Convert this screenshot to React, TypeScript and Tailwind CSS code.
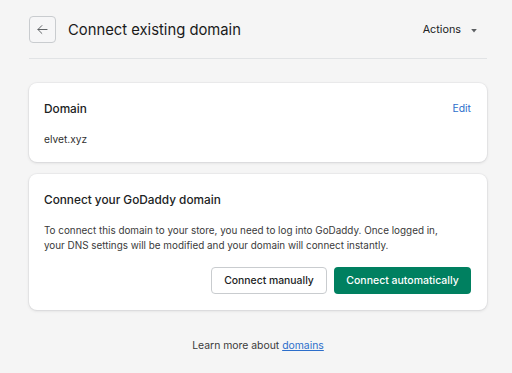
import React from 'react';

const App = () => {
  return (
    <div className="min-h-[373px] w-[512px] bg-[#f5f5f5] font-['Inter',sans-serif] text-[#202223]">
      <div className="ml-[29px] w-[458px] pt-4">
        {/* header */}
        <div className="flex items-center border-b border-[#e1e3e5] pb-[15px]">
          <button className="flex h-[27px] w-[27px] items-center justify-center rounded-[4px] border border-[#c9cccf] bg-[#f6f6f7]">
            <svg width="13" height="13" viewBox="0 0 20 20" fill="none" stroke="#5c5f62" strokeWidth="1.5" strokeLinecap="round" strokeLinejoin="round">
              <path d="M17 10H3M9 4l-6 6 6 6" />
            </svg>
          </button>
          <h1 className="ml-[12px] text-[14.8px] font-normal leading-[20px] text-[#1a1a1a]">Connect existing domain</h1>
          <div className="ml-auto mr-[10px] mt-[2px] flex items-center gap-[10px] text-[10.8px] text-[#202223]">
            <span>Actions</span>
            <svg width="6" height="4" viewBox="0 0 7 5">
              <path d="M0 0h7L3.5 4.5z" fill="#5c5f62" />
            </svg>
          </div>
        </div>

        {/* domain card */}
        <div className="mt-[24px] rounded-[8px] bg-white pb-[16px] pl-[15px] pr-[16px] pt-[18px] shadow-[0_0_0_1px_rgba(63,63,68,0.04),0_1px_3px_0_rgba(63,63,68,0.15)]">
          <div className="flex items-center justify-between">
            <h2 className="text-[11.8px] font-medium leading-[16px]">Domain</h2>
            <a className="text-[10.4px] leading-[16px] text-[#2c6ecb]">Edit</a>
          </div>
          <p className="mt-[15px] text-[10.2px] leading-[14px] text-[#303030]">elvet.xyz</p>
        </div>

        {/* godaddy card */}
        <div className="mt-[12px] rounded-[8px] bg-white pb-[16px] pl-[15px] pr-[16px] pt-[18px] shadow-[0_0_0_1px_rgba(63,63,68,0.04),0_1px_3px_0_rgba(63,63,68,0.15)]">
          <h2 className="text-[11.8px] font-medium leading-[16px]">Connect your GoDaddy domain</h2>
          <p className="mt-[15px] whitespace-nowrap text-[9.9px] leading-[15px] text-[#3a3a3a]">
            To connect this domain to your store, you need to log into GoDaddy. Once logged in,
            <br />
            your DNS settings will be modified and your domain will connect instantly.
          </p>
          <div className="mt-[14px] flex justify-end gap-[7px]">
            <button className="h-[27px] w-[116px] rounded-[4px] border border-[#c9cccf] bg-white text-[10.4px] font-medium text-[#202223]">
              Connect manually
            </button>
            <button className="h-[27px] w-[137px] rounded-[4px] bg-[#008060] text-[10.5px] font-medium text-white">
              Connect automatically
            </button>
          </div>
        </div>

        {/* footer */}
        <p className="mt-[29px] text-center text-[10.4px] leading-[14px] text-[#3a3a3a]">
          Learn more about <a className="text-[#2c6ecb] underline">domains</a>
        </p>
      </div>
    </div>
  );
};

export default App;
